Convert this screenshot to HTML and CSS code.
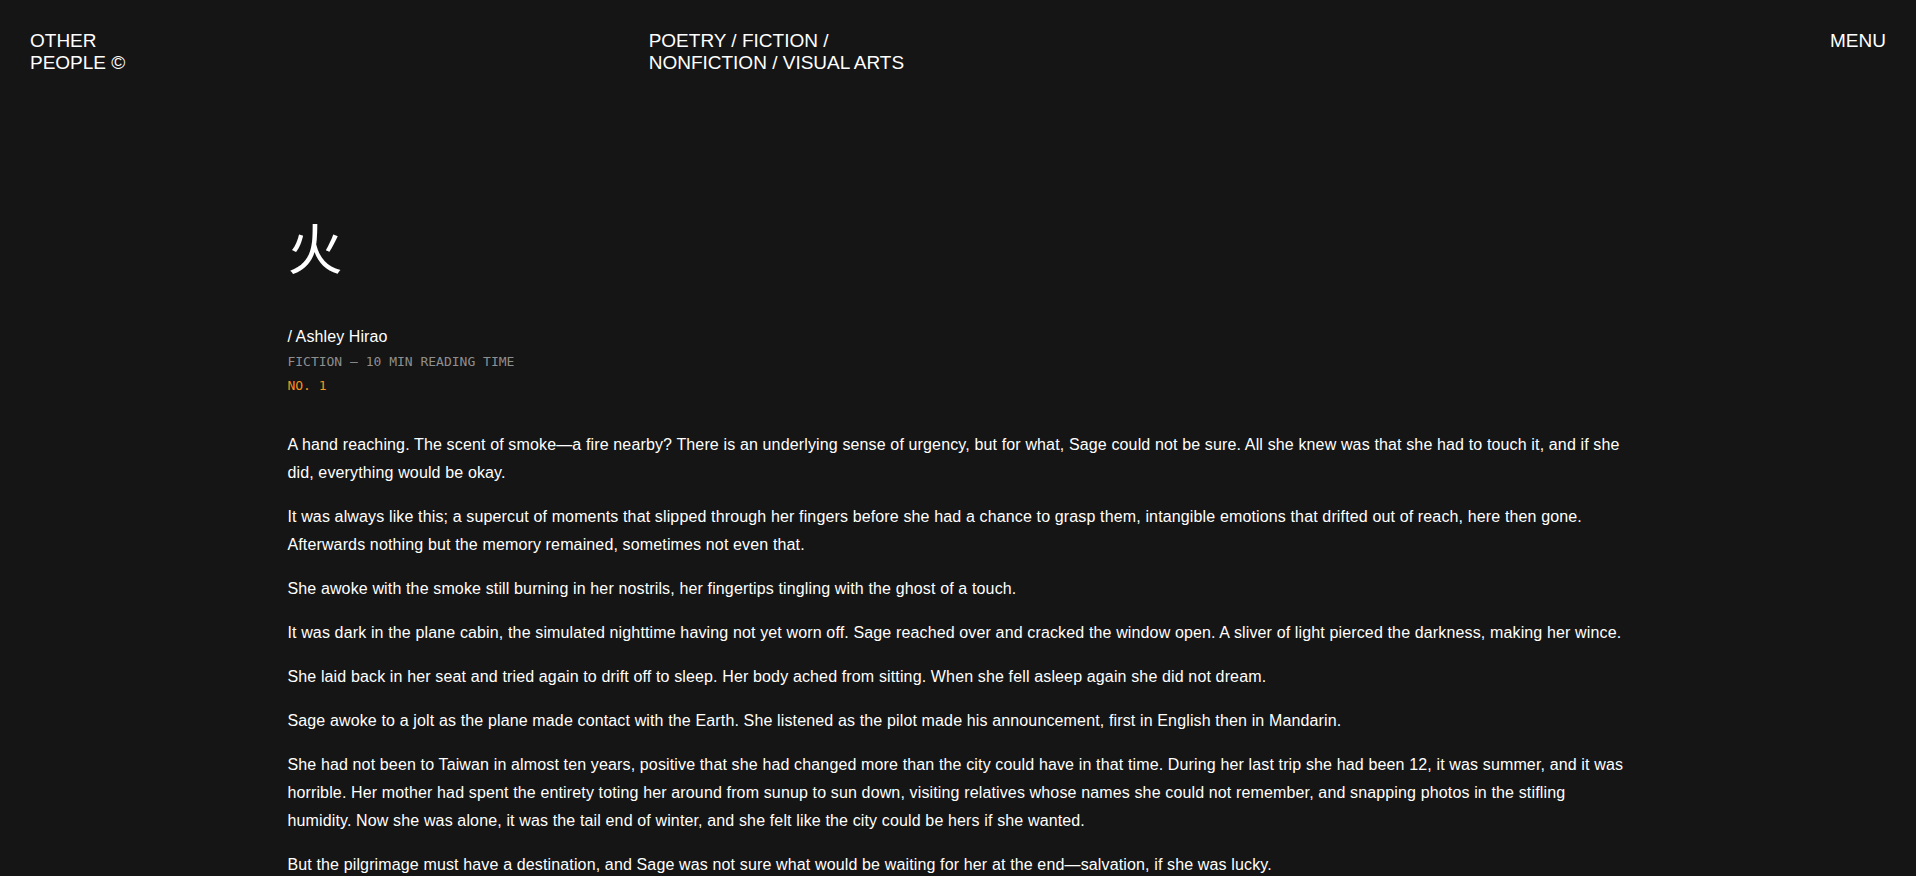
FILE: index.html
```html
<!DOCTYPE html>
<html lang="en">
<head>
<meta charset="utf-8">
<title>火 — Other People</title>
<link rel="stylesheet" href="styles.css">
</head>
<body>
<header class="site-header">
  <div class="brand">OTHER<br>PEOPLE ©</div>
  <nav class="sections">POETRY / FICTION /<br>NONFICTION / VISUAL ARTS</nav>
  <div class="menu">MENU</div>
</header>
<main class="article">
  <h1 class="title" lang="zh">火</h1>
  <div class="byline">/ Ashley Hirao</div>
  <div class="meta">FICTION — 10 MIN READING TIME</div>
  <div class="issue">NO. 1</div>
  <div class="body">
    <p>A hand reaching. The scent of smoke—a fire nearby? There is an underlying sense of urgency, but for what, Sage could not be sure. All she knew was that she had to touch it, and if she did, everything would be okay.</p>
    <p>It was always like this; a supercut of moments that slipped through her fingers before she had a chance to grasp them, intangible emotions that drifted out of reach, here then gone. Afterwards nothing but the memory remained, sometimes not even that.</p>
    <p>She awoke with the smoke still burning in her nostrils, her fingertips tingling with the ghost of a touch.</p>
    <p>It was dark in the plane cabin, the simulated nighttime having not yet worn off. Sage reached over and cracked the window open. A sliver of light pierced the darkness, making her wince.</p>
    <p>She laid back in her seat and tried again to drift off to sleep. Her body ached from sitting. When she fell asleep again she did not dream.</p>
    <p>Sage awoke to a jolt as the plane made contact with the Earth. She listened as the pilot made his announcement, first in English then in Mandarin.</p>
    <p>She had not been to Taiwan in almost ten years, positive that she had changed more than the city could have in that time. During her last trip she had been 12, it was summer, and it was horrible. Her mother had spent the entirety toting her around from sunup to sun down, visiting relatives whose names she could not remember, and snapping photos in the stifling humidity. Now she was alone, it was the tail end of winter, and she felt like the city could be hers if she wanted.</p>
    <p>But the pilgrimage must have a destination, and Sage was not sure what would be waiting for her at the end—salvation, if she was lucky.</p>
  </div>
</main>
</body>
</html>
```

FILE: styles.css
```css
html, body {
  margin: 0;
  padding: 0;
}
body {
  background: #151515;
  color: #ffffff;
  font-family: "Liberation Sans", Arial, sans-serif;
}
.site-header {
  display: grid;
  grid-template-columns: 1fr 1fr 1fr;
  padding: 30px 30px 0;
  font-size: 19px;
  line-height: 22px;
}
.menu {
  text-align: right;
}
.article {
  width: 70%;
  margin: 0 auto;
  padding-top: 131px;
}
.title {
  margin: 0;
  font-family: "Noto Sans CJK SC", "Noto Sans CJK TC", sans-serif;
  font-weight: 400;
  font-size: 55px;
  line-height: 80px;
}
.byline {
  margin-top: 42px;
  font-size: 16px;
  line-height: 20px;
  letter-spacing: 0.1px;
}
.meta, .issue {
  font-family: "DejaVu Sans Mono", "Liberation Mono", monospace;
  font-size: 13px;
  line-height: 24px;
  color: #8f8f8f;
}
.meta {
  margin-top: 3px;
}
.issue {
  color: #f7931e;
}
.body {
  margin-top: 33px;
  font-size: 16px;
  line-height: 28px;
  letter-spacing: 0.14px;
}
.body p {
  margin: 0 0 16px;
}
```
